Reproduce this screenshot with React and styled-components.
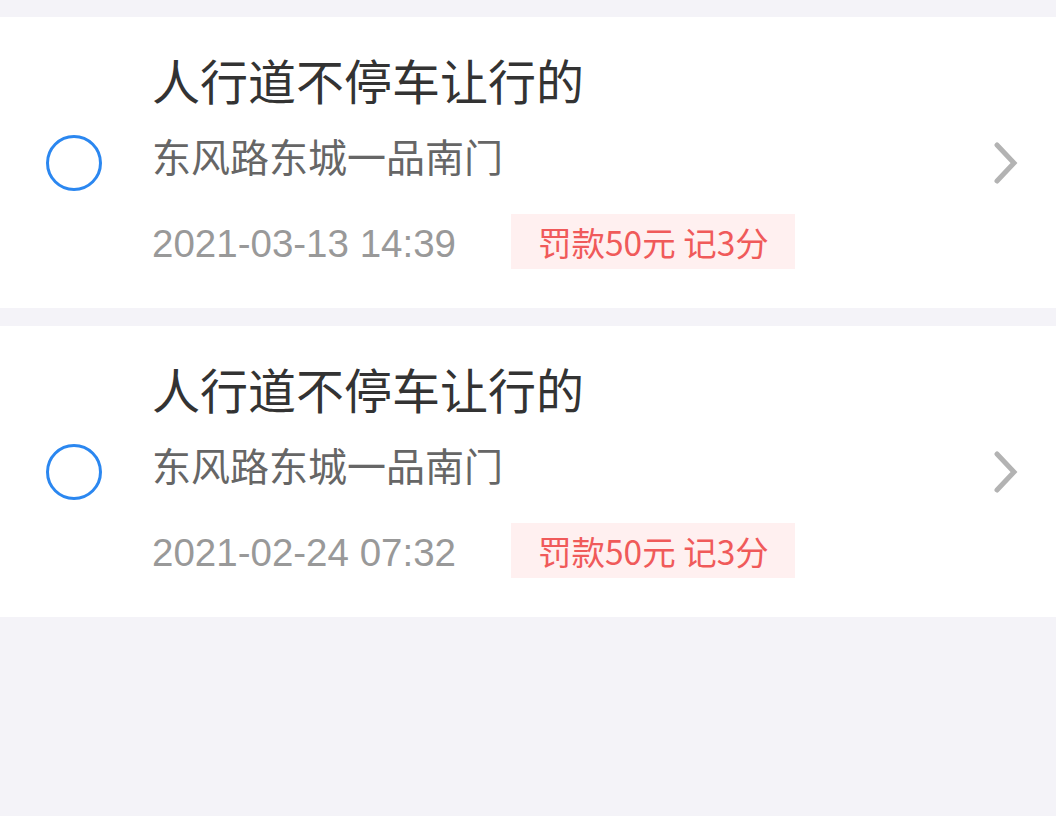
import React from "react";
import styled, { createGlobalStyle } from "styled-components";

const GlobalStyle = createGlobalStyle`
  html, body {
    margin: 0;
    padding: 0;
    background: #f4f3f8;
  }
  body {
    font-family: "Noto Sans CJK SC", "Noto Sans", sans-serif;
  }
`;

const Page = styled.div`
  min-height: 816px;
  background: #f4f3f8;
  padding-top: 17px;
  display: flex;
  flex-direction: column;
  gap: 18px;
`;

const Card = styled.div`
  background: #ffffff;
  height: 291px;
  box-sizing: border-box;
  padding: 0 38px 0 46px;
  display: flex;
  align-items: center;
`;

const Radio = styled.div`
  width: 56px;
  height: 56px;
  box-sizing: border-box;
  border: 3px solid #2b87f0;
  border-radius: 50%;
  flex-shrink: 0;
`;

const Body = styled.div`
  flex: 1;
  margin-left: 50px;
  padding: 32px 0 39px;
  display: flex;
  flex-direction: column;
  align-self: stretch;
`;

const Title = styled.div`
  font-size: 48px;
  line-height: 60px;
  color: #333333;
`;

const Address = styled.div`
  margin-top: 21px;
  font-size: 39px;
  line-height: 50px;
  color: #666666;
`;

const Meta = styled.div`
  margin-top: 34px;
  display: flex;
  align-items: center;
  height: 55px;
`;

const Time = styled.span`
  margin-top: 4px;
  font-family: "Liberation Sans", Arial, sans-serif;
  font-size: 38.5px;
  color: #999999;
`;

const Tag = styled.span`
  margin-left: 55px;
  height: 55px;
  padding: 0 26px 0 27px;
  display: flex;
  align-items: center;
  background: #fff0f0;
  color: #f05a5a;
  font-size: 33.5px;
`;

const Arrow = styled.svg`
  width: 24px;
  height: 42px;
  flex-shrink: 0;
`;

const records = [
  { id: 1, title: "人行道不停车让行的", place: "东风路东城一品南门", time: "2021-03-13 14:39", fine: "罚款50元 记3分" },
  { id: 2, title: "人行道不停车让行的", place: "东风路东城一品南门", time: "2021-02-24 07:32", fine: "罚款50元 记3分" },
];

const App = () => {
  return (
    <Page>
      <GlobalStyle />
      {records.map(item => (
        <Card key={item.id}>
          <Radio />
          <Body>
            <Title>{item.title}</Title>
            <Address>{item.place}</Address>
            <Meta>
              <Time>{item.time}</Time>
              <Tag>{item.fine}</Tag>
            </Meta>
          </Body>
          <Arrow viewBox="0 0 24 42">
            <path d="M3 3 L20 21 L3 39" fill="none" stroke="#b3b3b3" strokeWidth="5" strokeLinecap="round" strokeLinejoin="miter" />
          </Arrow>
        </Card>
      ))}
    </Page>
  );
};

export default App;
